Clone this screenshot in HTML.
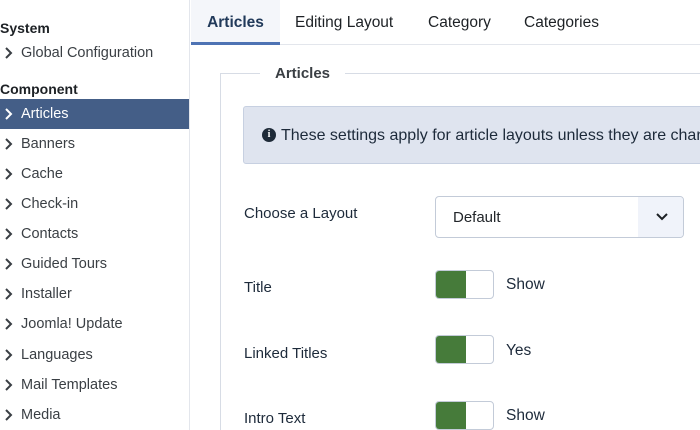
<!DOCTYPE html>
<html><head><style>
*{margin:0;padding:0;box-sizing:border-box}
html,body{width:700px;height:430px;overflow:hidden}
body{background:#fff;font-family:"Liberation Sans",sans-serif;color:#22262a;position:relative}
.side{position:absolute;left:0;top:0;width:190px;height:430px;border-right:1px solid #e3e6ec;background:#fff}
.h{position:absolute;left:0;font-weight:bold;font-size:14px;color:#1d2125}
.it{position:absolute;left:0;width:189px;height:30px;line-height:31px;font-size:14.5px;color:#3a3f44;padding-left:21px}
.it svg{position:absolute;left:4px;top:9px}
.it.act{background:#445e87;color:#fff}
.tabs{position:absolute;left:191px;top:0;width:509px;height:45px;border-bottom:1px solid #e3e6ec}
.tab{position:absolute;top:0;height:45px;line-height:46px;font-size:15.5px;color:#1d2125}
.tab.act{background:#f4f6fa;font-weight:bold;color:#213a5a;border-bottom:3px solid #4e73b4;left:0;width:89px;text-align:center}
.fs{position:absolute;left:220px;top:73px;width:480px;height:357px;border-left:1px solid #d7dce5;border-top:1px solid #d7dce5}
.legend{position:absolute;left:260px;top:65px;background:#fff;padding:0 15px;font-weight:bold;font-size:15px;color:#3a3f44;height:18px;line-height:18px}
.alert{position:absolute;left:243px;top:106px;width:470px;height:58px;background:#dfe4ef;border:1px solid #c7d0e1;border-radius:3px;font-size:16px;color:#1d2a3a;line-height:57px;padding-left:37px;white-space:nowrap;overflow:hidden}
.alert .i{position:absolute;left:18px;top:21px;width:14px;height:14px;border-radius:50%;background:#1e2a38;color:#fff;font-size:10px;font-weight:bold;line-height:14px;text-align:center;font-family:"Liberation Serif",serif}
.lab{position:absolute;left:244px;font-size:15px;color:#1d2a3a}
.sel{position:absolute;left:435px;top:196px;width:249px;height:42px;border:1px solid #c3cbd8;border-radius:4px;font-size:15px;line-height:41px;padding-left:17px;color:#22262a;overflow:hidden}
.sel .ar{position:absolute;right:0;top:0;width:45px;height:40px;background:#f0f3fa}
.tg{position:absolute;left:435px;width:59px;height:29px;border:1px solid #c3cbd8;border-radius:4px;overflow:hidden}
.tg i{position:absolute;left:0;top:0;width:30px;height:29px;background:#467b3a}
.tv{position:absolute;left:506px;font-size:15.5px;color:#1d2a3a}
</style></head><body>
<div class="side">
<div class="h" style="top:20px">System</div>
<div class="it" style="top:38px"><svg width="10" height="12" viewBox="0 0 10 12"><path d="M2 1l5 5-5 5" fill="none" stroke="#3a3f44" stroke-width="2"/></svg>Global Configuration</div>
<div class="h" style="top:81px">Component</div>
<div class="it act" style="top:99px"><svg width="10" height="12" viewBox="0 0 10 12"><path d="M2 1l5 5-5 5" fill="none" stroke="#fff" stroke-width="2"/></svg>Articles</div>
<div class="it" style="top:129px"><svg width="10" height="12" viewBox="0 0 10 12"><path d="M2 1l5 5-5 5" fill="none" stroke="#3a3f44" stroke-width="2"/></svg>Banners</div>
<div class="it" style="top:159px"><svg width="10" height="12" viewBox="0 0 10 12"><path d="M2 1l5 5-5 5" fill="none" stroke="#3a3f44" stroke-width="2"/></svg>Cache</div>
<div class="it" style="top:189px"><svg width="10" height="12" viewBox="0 0 10 12"><path d="M2 1l5 5-5 5" fill="none" stroke="#3a3f44" stroke-width="2"/></svg>Check-in</div>
<div class="it" style="top:219px"><svg width="10" height="12" viewBox="0 0 10 12"><path d="M2 1l5 5-5 5" fill="none" stroke="#3a3f44" stroke-width="2"/></svg>Contacts</div>
<div class="it" style="top:249px"><svg width="10" height="12" viewBox="0 0 10 12"><path d="M2 1l5 5-5 5" fill="none" stroke="#3a3f44" stroke-width="2"/></svg>Guided Tours</div>
<div class="it" style="top:279px"><svg width="10" height="12" viewBox="0 0 10 12"><path d="M2 1l5 5-5 5" fill="none" stroke="#3a3f44" stroke-width="2"/></svg>Installer</div>
<div class="it" style="top:309px"><svg width="10" height="12" viewBox="0 0 10 12"><path d="M2 1l5 5-5 5" fill="none" stroke="#3a3f44" stroke-width="2"/></svg>Joomla! Update</div>
<div class="it" style="top:340px"><svg width="10" height="12" viewBox="0 0 10 12"><path d="M2 1l5 5-5 5" fill="none" stroke="#3a3f44" stroke-width="2"/></svg>Languages</div>
<div class="it" style="top:370px"><svg width="10" height="12" viewBox="0 0 10 12"><path d="M2 1l5 5-5 5" fill="none" stroke="#3a3f44" stroke-width="2"/></svg>Mail Templates</div>
<div class="it" style="top:400px"><svg width="10" height="12" viewBox="0 0 10 12"><path d="M2 1l5 5-5 5" fill="none" stroke="#3a3f44" stroke-width="2"/></svg>Media</div>
</div>
<div class="tabs">
<div class="tab act">Articles</div>
<div class="tab" style="left:104px">Editing Layout</div>
<div class="tab" style="left:237px">Category</div>
<div class="tab" style="left:333px">Categories</div>
</div>
<div class="fs"></div>
<div class="legend">Articles</div>
<div class="alert"><span class="i">i</span>These settings apply for article layouts unless they are changed for a specific menu item.</div>
<div class="lab" style="top:205px">Choose a Layout</div>
<div class="sel">Default<div class="ar"><svg width="45" height="40" viewBox="0 0 45 40"><path d="M19 17l5 5 5-5" fill="none" stroke="#1d2125" stroke-width="2"/></svg></div></div>
<div class="lab" style="top:279px">Title</div>
<div class="tg" style="top:270px"><i></i></div><div class="tv" style="top:276px">Show</div>
<div class="lab" style="top:345px">Linked Titles</div>
<div class="tg" style="top:335px"><i></i></div><div class="tv" style="top:342px">Yes</div>
<div class="lab" style="top:410px">Intro Text</div>
<div class="tg" style="top:401px"><i></i></div><div class="tv" style="top:407px">Show</div>
</body></html>
